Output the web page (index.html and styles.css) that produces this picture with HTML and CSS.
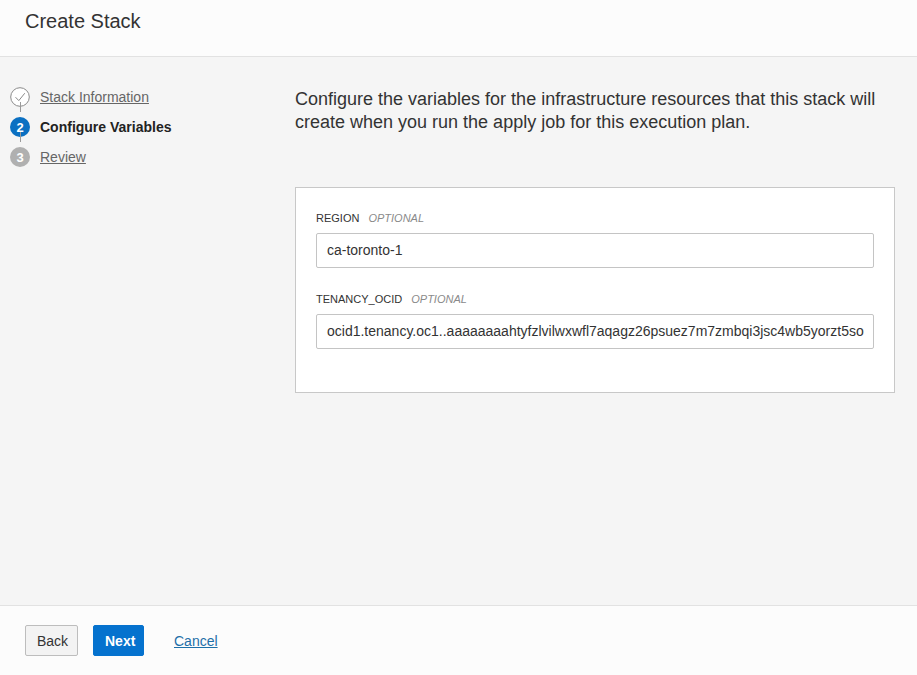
FILE: index.html
```html
<!DOCTYPE html>
<html>
<head>
<meta charset="utf-8">
<link rel="stylesheet" href="styles.css">
</head>
<body>
<div class="page">
  <header class="header"><h1 class="title">Create Stack</h1></header>
  <main class="main">
    <nav class="steps">
      <div class="step">
        <span class="dot dot-done"><svg width="20" height="20" viewBox="0 0 20 20"><circle cx="10" cy="10" r="9.3" fill="#fff" stroke="#8a8a8a" stroke-width="1"/><path d="M5.5 10.2 L8.8 13.6 L14.8 6.2" fill="none" stroke="#8a8a8a" stroke-width="1"/></svg></span>
        <a class="step-link" href="#">Stack Information</a>
      </div>
      <div class="step">
        <span class="dot dot-current">2</span>
        <span class="step-current">Configure Variables</span>
      </div>
      <div class="step">
        <span class="dot dot-todo">3</span>
        <a class="step-link" href="#">Review</a>
      </div>
    </nav>
    <section class="content">
      <p class="intro">Configure the variables for the infrastructure resources that this stack will create when you run the apply job for this execution plan.</p>
      <div class="panel">
        <div class="field">
          <label class="label">REGION <span class="opt">OPTIONAL</span></label>
          <div class="input">ca-toronto-1</div>
        </div>
        <div class="field">
          <label class="label">TENANCY_OCID <span class="opt">OPTIONAL</span></label>
          <div class="input">ocid1.tenancy.oc1..aaaaaaaahtyfzlvilwxwfl7aqagz26psuez7m7zmbqi3jsc4wb5yorzt5so</div>
        </div>
      </div>
    </section>
  </main>
  <footer class="footer">
    <button class="btn btn-back">Back</button>
    <button class="btn btn-next">Next</button>
    <a class="cancel" href="#">Cancel</a>
  </footer>
</div>
</body>
</html>
```

FILE: styles.css
```css
* { box-sizing: border-box; }
html, body { margin: 0; padding: 0; }
body {
  font-family: "Liberation Sans", Arial, sans-serif;
  color: #333;
  background: #f5f5f5;
}
.page {
  width: 917px;
  height: 675px;
  display: flex;
  flex-direction: column;
}
.header {
  height: 57px;
  background: #fcfcfc;
  border-bottom: 1px solid #e2e2e2;
  padding: 9px 0 0 25px;
}
.title {
  margin: 0;
  font-size: 20px;
  font-weight: normal;
  color: #333;
  line-height: 24px;
}
.main {
  flex: 1;
  display: flex;
  background: #f5f5f5;
}
.steps {
  width: 295px;
  padding: 25px 0 0 10px;
  display: flex;
  flex-direction: column;
}
.step {
  height: 30px;
  display: flex;
  align-items: center;
  position: relative;
}
.step + .step::before {
  content: "";
  position: absolute;
  left: 9.5px;
  top: -10px;
  height: 10px;
  width: 1px;
  background: #9a9a9a;
}
.dot {
  width: 20px;
  height: 20px;
  border-radius: 50%;
  flex: none;
  display: flex;
  align-items: center;
  justify-content: center;
  font-size: 13px;
  color: #fff;
  margin-right: 10px;
}
.dot svg { display: block; }
.dot-current { background: #0b70c2; font-weight: bold; }
.dot-todo { background: #b0b0b0; font-weight: bold; }
.step-link {
  color: #666;
  font-size: 14px;
  text-decoration: underline;
}
.step-current {
  font-size: 14px;
  font-weight: bold;
  color: #222;
}
.content {
  flex: none;
  width: 600px;
  padding-top: 31px;
}
.intro {
  margin: 0 0 53px 0;
  font-size: 18px;
  line-height: 23px;
  color: #333;
  width: 600px;
}
.panel {
  width: 600px;
  height: 206px;
  background: #fff;
  border: 1px solid #c8c8c8;
  padding: 23px 20px 0 20px;
}
.field + .field { margin-top: 24px; }
.label {
  display: block;
  font-size: 11px;
  color: #333;
  line-height: 14px;
  margin-bottom: 8px;
}
.opt {
  font-style: italic;
  color: #8a8a8a;
  margin-left: 6px;
}
.input {
  height: 35px;
  width: 558px;
  border: 1px solid #c4c4c4;
  border-radius: 2px;
  background: #fff;
  padding: 0 10px;
  font-size: 14px;
  line-height: 33px;
  color: #333;
  white-space: nowrap;
  overflow: hidden;
}
.footer {
  height: 70px;
  background: #fcfcfc;
  border-top: 1px solid #e2e2e2;
  display: flex;
  align-items: center;
  padding: 0 0 0 25px;
}
.btn {
  height: 31px;
  font-family: "Liberation Sans", Arial, sans-serif;
  font-size: 14px;
  border-radius: 2px;
  padding: 0 11px;
  cursor: pointer;
}
.btn-back {
  background: #f3f3f3;
  border: 1px solid #bdbdbd;
  color: #333;
  width: 53px;
}
.btn-next {
  background: #0572ce;
  border: 1px solid #0572ce;
  color: #fff;
  font-weight: bold;
  width: 51px;
  margin-left: 15px;
}
.cancel {
  margin-left: 30px;
  color: #1e6fa8;
  font-size: 14px;
  text-decoration: underline;
}
```
